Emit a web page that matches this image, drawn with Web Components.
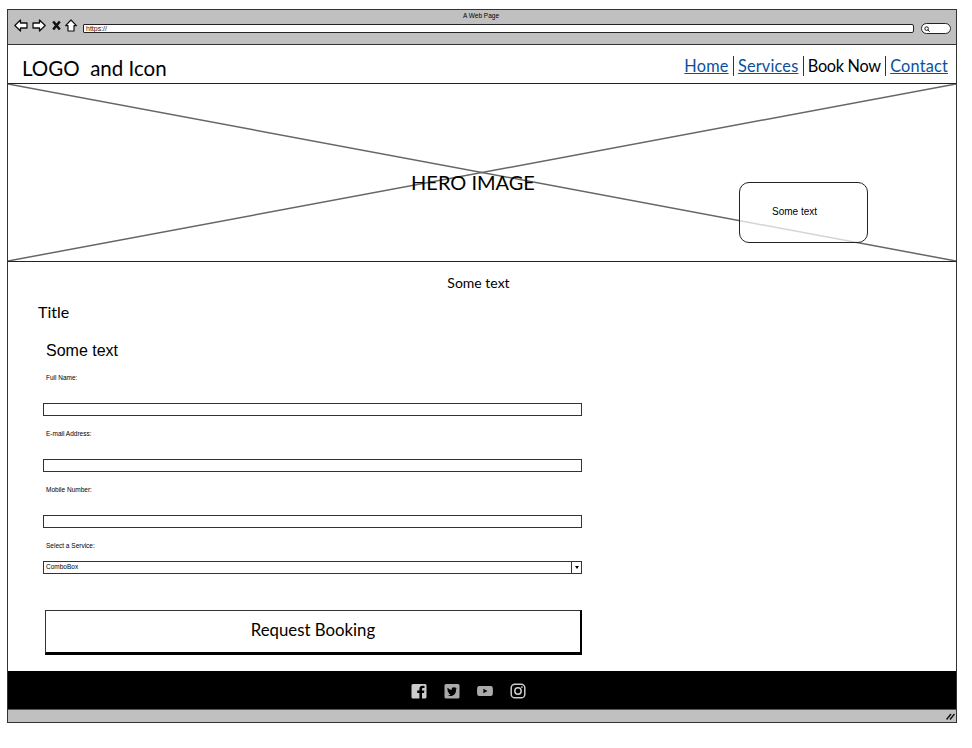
<!DOCTYPE html>
<html lang="en">
<head>
<meta charset="utf-8">
<title>A Web Page</title>
<style>
  html, body { margin: 0; background: #fff; }
  body { font-family: "Lato", "Liberation Sans", sans-serif; color: #000; }
</style>
</head>
<body>
<wf-window>
  <wf-chrome slot="chrome" title="A Web Page" url="https://"></wf-chrome>
  <wf-header>
    <wf-link>Home</wf-link>
    <wf-link>Services</wf-link>
    <wf-link current>Book Now</wf-link>
    <wf-link>Contact</wf-link>
  </wf-header>
  <wf-hero label="HERO IMAGE" note="Some text"></wf-hero>
  <wf-booking>
    <wf-field label="Full Name:"></wf-field>
    <wf-field label="E-mail Address:"></wf-field>
    <wf-field label="Mobile Number:"></wf-field>
    <wf-field label="Select a Service:" combo="ComboBox"></wf-field>
  </wf-booking>
  <wf-footer></wf-footer>
</wf-window>

<script>
const define = (name, html, Base = HTMLElement) => {
  customElements.define(name, class extends Base {
    constructor() {
      super();
      this.attachShadow({mode: 'open'}).innerHTML = typeof html === 'function' ? html(this) : html;
    }
  });
};

define('wf-window', `
  <style>
    :host { display: flex; flex-direction: column; box-sizing: border-box; width: 950px; height: 714px; margin: 9px 0 0 7px; border: 1px solid #333; }
    .main { flex: 1; display: flex; flex-direction: column; min-height: 0; }
    .status { height: 12px; background: #c0c0c0; border-top: 1px solid #555; display: flex; justify-content: flex-end; align-items: center; padding-right: 1px; }
  </style>
  <slot name="chrome"></slot>
  <div class="main"><slot></slot></div>
  <div class="status">
    <svg width="9" height="7" viewBox="0 0 9 7"><path d="M0.5 6.5 L5 1 M4 6.5 L8.5 1" stroke="#111" stroke-width="1.5" fill="none"/></svg>
  </div>
`);

customElements.define('wf-chrome', class extends HTMLElement {
  constructor() {
    super();
    this.attachShadow({mode: 'open'});
  }
  connectedCallback() {
    this.shadowRoot.innerHTML = `
    <style>
      :host { display: block; height: 35px; box-sizing: border-box; background: #c0c0c0; border-bottom: 1px solid #333; font-family: "Liberation Sans", sans-serif; }
      .title { height: 10px; padding-top: 1px; box-sizing: border-box; font-size: 6.5px; line-height: 9px; text-align: center; margin-left: -2px; }
      .row { display: flex; align-items: center; height: 16px; padding-left: 6px; }
      svg { display: block; flex: none; }
      .nav { display: flex; align-items: center; gap: 4px; margin: -5px 6px 0 0; }
      .url { flex: none; width: 831px; height: 9px; box-sizing: border-box; background: #fff; border: 1px solid #222; border-radius: 1px 2px 2px 1px; font-size: 7px; line-height: 7px; padding-left: 2px; color: #301020; overflow: hidden; }
      .search { flex: none; width: 30px; height: 11px; box-sizing: border-box; margin-left: 7px; background: #fff; border: 1px solid #222; border-radius: 6px; padding: 2px 0 0 2px; }
    </style>
    <div class="title">${this.getAttribute('title')}</div>
    <div class="row">
      <div class="nav">
        <svg width="14" height="13" viewBox="0 0 14 13"><path d="M0.8 6.5 L6.5 1 V4 H13 V9 H6.5 V12 Z" fill="#fff" stroke="#111" stroke-width="1.3" stroke-linejoin="round"/></svg>
        <svg width="14" height="13" viewBox="0 0 14 13"><path d="M13.2 6.5 L7.5 1 V4 H1 V9 H7.5 V12 Z" fill="#fff" stroke="#111" stroke-width="1.3" stroke-linejoin="round"/></svg>
        <svg width="9" height="11" viewBox="0 0 9 11" style="margin-left:2px"><path d="M1.2 1.5 L7.8 9.5 M7.8 1.5 L1.2 9.5" stroke="#111" stroke-width="2.6"/></svg>
        <svg width="12" height="13" viewBox="0 0 12 13"><path d="M6 1 L11.4 6.6 H9 V12 H3 V6.6 H0.6 Z" fill="#fff" stroke="#111" stroke-width="1.2" stroke-linejoin="round"/></svg>
      </div>
      <div class="url">${this.getAttribute('url')}</div>
      <div class="search"><svg width="6" height="6" viewBox="0 0 6 6"><circle cx="2.6" cy="2.6" r="1.8" fill="none" stroke="#111"/><path d="M4 4 L5.6 5.8" stroke="#111"/></svg></div>
    </div>`;
  }
});

define('wf-link', `
  <style>
    :host { display: block; font-size: 16.3px; letter-spacing: .2px; line-height: 20px; padding: 0 4.2px; border-left: 1px solid #333; color: #0b4f9e; text-decoration: underline; }
    :host(:first-child) { border-left: 0; }
    :host(:last-child) { padding-right: 0; }
    :host([current]) { color: #000; text-decoration: none; letter-spacing: -.3px; }
  </style>
  <slot></slot>
`);

define('wf-header', `
  <style>
    :host { display: flex; justify-content: space-between; align-items: flex-start; height: 39px; box-sizing: border-box; border-bottom: 1px solid #222; padding: 11px 8px 0 14px; }
    .logo { font-size: 20.5px; line-height: 25px; white-space: pre; }
    nav { display: flex; margin-top: 0; }
  </style>
  <div class="logo">LOGO  and Icon</div>
  <nav><slot></slot></nav>
`);

customElements.define('wf-hero', class extends HTMLElement {
  constructor() {
    super();
    this.attachShadow({mode: 'open'});
  }
  connectedCallback() {
    this.shadowRoot.innerHTML = `
    <style>
      :host { display: flex; position: relative; align-items: center; justify-content: center; height: 178px; box-sizing: border-box; border-bottom: 1px solid #222; }
      svg { position: absolute; inset: 0; width: 100%; height: 100%; }
      .label { position: relative; font-size: 20px; line-height: 24px; margin: 0 18px 0 0; top: 9px; }
      .note { position: absolute; left: 731px; top: 98px; width: 129px; height: 61px; box-sizing: border-box; border: 1px solid #222; border-radius: 10px; background: rgba(255,255,255,.72); font: 10px/14px "Liberation Sans", sans-serif; padding: 22px 0 0 32px; }
    </style>
    <svg viewBox="0 0 948 177" preserveAspectRatio="none">
      <path d="M0 0 L948 177 M948 0 L0 177" stroke="#666" stroke-width="1.5" fill="none"/>
    </svg>
    <div class="label">${this.getAttribute('label')}</div>
    <div class="note">${this.getAttribute('note')}</div>`;
  }
});

define('wf-booking', `
  <style>
    :host { display: block; flex: 1; min-height: 0; }
    .lead { font-size: 14px; line-height: 18px; text-align: center; padding: 12px 0 0 0; margin-left: -7px; }
    h2 { font-size: 16px; font-weight: 400; line-height: 20px; margin: 10px 0 0 30px; }
    h3 { font: 400 16px/20px "Liberation Sans", sans-serif; margin: 19px 0 0 38px; }
    form { display: flex; flex-direction: column; gap: 0; width: 539px; margin: 13px 0 0 35px; }
    button { display: block; width: 537px; height: 45px; margin: 36px 0 0 2px; box-sizing: border-box; background: #fff; border: 1px solid #333; border-right: 2px solid #000; border-bottom: 3px solid #000; font: 16.8px/20px "Lato", sans-serif; color: #000; padding: 0 0 3px; border-radius: 0; }
  </style>
  <div class="lead">Some text</div>
  <h2>Title</h2>
  <h3>Some text</h3>
  <form><slot></slot><button type="button">Request Booking</button></form>
`);

customElements.define('wf-field', class extends HTMLElement {
  constructor() {
    super();
    this.attachShadow({mode: 'open'});
  }
  connectedCallback() {
    const combo = this.getAttribute('combo');
    this.shadowRoot.innerHTML = `
    <style>
      :host { display: block; height: 56px; font: 6.5px/8px "Liberation Sans", sans-serif; }
      :host([combo]) { height: auto; }
      label { display: block; height: 8px; padding: 0 0 0 3px; }
      .box { box-sizing: border-box; height: 13px; margin-top: 21px; background: #fff; border: 1px solid #333; }
      :host([combo]) .box { margin-top: 11px; display: flex; justify-content: space-between; padding-left: 2px; line-height: 10px; }
      .arrow { width: 9px; border-left: 1px solid #333; display: flex; align-items: center; justify-content: center; }
      .arrow i { width: 0; height: 0; border: 2.5px solid transparent; border-top: 3px solid #000; border-bottom: 0; }
    </style>
    <label>${this.getAttribute('label')}</label>
    <div class="box">${combo ? `<span>${combo}</span><span class="arrow"><i></i></span>` : ''}</div>`;
  }
});

define('wf-footer', `
  <style>
    :host { display: flex; justify-content: center; align-items: center; gap: 17px; height: 38px; box-sizing: border-box; flex: none; background: #000; padding: 1px 28px 0 0; }
    svg { display: block; flex: none; }
  </style>
  <svg width="16" height="16" viewBox="0 0 16 16"><path fill="#ccc" fill-rule="evenodd" d="M2 1 H14 A1.5 1.5 0 0 1 15.5 2.5 V14 A1.5 1.5 0 0 1 14 15.5 H11 V10 H13 L13.4 7.6 H11 V6.2 C11 5.4 11.4 5 12.2 5 H13.5 V3 C12.8 2.9 12.2 2.8 11.5 2.8 C9.6 2.8 8.4 4 8.4 6 V7.6 H6.2 V10 H8.4 V15.5 H2 A1.5 1.5 0 0 1 .5 14 V2.5 A1.5 1.5 0 0 1 2 1 Z"/></svg>
  <svg width="16" height="16" viewBox="0 0 16 16"><path fill="#aaa" fill-rule="evenodd" d="M2 1 H14 A1.5 1.5 0 0 1 15.5 2.5 V14 A1.5 1.5 0 0 1 14 15.5 H2 A1.5 1.5 0 0 1 .5 14 V2.5 A1.5 1.5 0 0 1 2 1 Z M12.6 5 C12.2 5.2 11.8 5.3 11.4 5.3 C11.8 5 12.1 4.7 12.3 4.2 C11.9 4.4 11.4 4.6 11 4.7 C10.1 3.8 8.4 4.1 7.9 5.3 C7.7 5.8 7.7 6.3 7.8 6.8 C6.2 6.7 4.7 6 3.7 4.7 C3.1 5.8 3.4 7 4.4 7.7 C4.1 7.7 3.8 7.6 3.5 7.5 C3.5 8.6 4.3 9.6 5.4 9.8 C5.1 9.9 4.8 9.9 4.5 9.8 C4.8 10.7 5.6 11.3 6.6 11.4 C5.7 12.1 4.6 12.4 3.4 12.3 C7.9 14.6 12.4 11.3 12.1 6.2 C12.4 5.9 12.6 5.5 12.6 5 Z"/></svg>
  <svg width="16" height="16" viewBox="0 0 16 16"><path fill="#aaa" fill-rule="evenodd" d="M2.2 3 H13.8 C15 3 15.7 3.8 15.8 5 C16 6.7 16 9.3 15.8 11 C15.7 12.2 15 13 13.8 13 H2.2 C1 13 .3 12.2 .2 11 C0 9.3 0 6.7 .2 5 C.3 3.8 1 3 2.2 3 Z M6.4 5.8 V10.2 L10.4 8 Z"/></svg>
  <svg width="16" height="16" viewBox="0 0 16 16"><rect x="1.2" y="1.2" width="13.6" height="13.6" rx="3.6" fill="none" stroke="#ccc" stroke-width="1.5"/><circle cx="8" cy="8" r="3.2" fill="none" stroke="#ccc" stroke-width="1.5"/><circle cx="11.9" cy="4.1" r=".9" fill="#ccc"/></svg>
`);
</script>
</body>
</html>
